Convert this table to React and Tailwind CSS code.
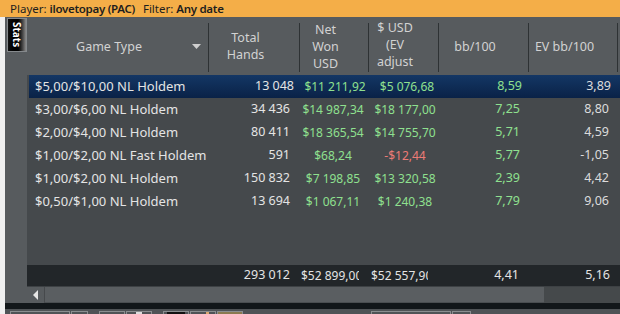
const rows = [
  { game: '$5,00/$10,00 NL Holdem', hands: '13 048', net: '$11 211,92', ev: '$5 076,68', bb: '8,59', evbb: '3,89', selected: true },
  { game: '$3,00/$6,00 NL Holdem', hands: '34 436', net: '$14 987,34', ev: '$18 177,00', bb: '7,25', evbb: '8,80' },
  { game: '$2,00/$4,00 NL Holdem', hands: '80 411', net: '$18 365,54', ev: '$14 755,70', bb: '5,71', evbb: '4,59' },
  { game: '$1,00/$2,00 NL Fast Holdem', hands: '591', net: '$68,24', ev: '-$12,44', bb: '5,77', evbb: '-1,05' },
  { game: '$1,00/$2,00 NL Holdem', hands: '150 832', net: '$7 198,85', ev: '$13 320,58', bb: '2,39', evbb: '4,42' },
  { game: '$0,50/$1,00 NL Holdem', hands: '13 694', net: '$1 067,11', ev: '$1 240,38', bb: '7,79', evbb: '9,06' },
]

const cols = 'grid grid-cols-[182px_91px_69px_70px_90px_89px_2px]'

const HeaderCell = ({ children, last }) => (
  <div className="relative flex items-center justify-center pr-[18px] text-center leading-[17px]">
    {children}
    {!last && <div className="absolute right-0 top-[6px] bottom-[3px] w-px bg-[#2e3234]" />}
  </div>
)

const Row = ({ r }) => {
  const neg = (v) => v.startsWith('-')
  return (
    <div
      className={`${cols} h-[23px] items-center ${r.selected ? 'ml-[2px] bg-gradient-to-b from-[#143765] to-[#0a2247]' : ''}`}
    >
      <div className={`${r.selected ? 'pl-[6px]' : 'pl-[8px]'} text-[#e4e4e4] whitespace-nowrap`}>{r.game}</div>
      <div className={`text-right ${r.selected ? 'pr-[8px]' : 'pr-[10px]'} text-[12.5px] text-[#e4e4e4]`}>{r.hands}</div>
      <div className="text-center pr-[3px] text-[12px] text-[#8fe08f] whitespace-nowrap overflow-hidden">{r.net}</div>
      <div className={`text-center pl-[2px] text-[12px] whitespace-nowrap overflow-hidden ${neg(r.ev) ? 'text-[#ec7b76]' : 'text-[#8fe08f]'}`}>{r.ev}</div>
      <div className="text-right pr-[9px] text-[12.5px] text-[#8fe08f]">{r.bb}</div>
      <div className="text-right pr-[9px] text-[12.5px] text-[#dcdcdc]">{r.evbb}</div>
      <div />
    </div>
  )
}

export default function App() {
  return (
    <div
      className="w-[620px] h-[314px] overflow-hidden flex flex-col bg-[#f0f0f0] text-[13px]"
      style={{ fontFamily: '"Noto Sans", "Open Sans", sans-serif' }}
    >
      <div className="h-[17px] shrink-0 bg-[#f4ae48] flex items-center pl-[10px] text-[11.5px] text-[#1e1e1e] leading-none">
        <span>Player:</span>
        <span className="ml-[3px] font-semibold tracking-[-0.3px]">ilovetopay (PAC)</span>
        <span className="ml-[8px]">Filter:</span>
        <span className="ml-[3px] font-semibold tracking-[-0.3px]">Any date</span>
      </div>

      <div className="flex flex-1 min-h-0 ml-[5px] flex-col bg-[#575b5e]">
        <div className="flex flex-1 min-h-0">
          {/* side panel */}
          <div className="w-[22px] shrink-0 bg-[#575b5e] pt-[1px] pl-[2px]">
            <div className="w-[20px] h-[34px] border border-[#85898c] bg-gradient-to-r from-[#111] via-[#000] to-[#8a8a8a] flex items-center justify-center">
              <span
                className="text-white font-bold text-[10px] leading-none"
                style={{ writingMode: 'vertical-rl' }}
              >
                Stats
              </span>
            </div>
          </div>

          {/* table */}
          <div className="flex-1 flex flex-col bg-[#45494c]">
            <div className={`${cols} h-[58px] shrink-0 bg-[#575b5e] text-[12.5px] text-[#d2d2d2]`}>
              <HeaderCell>
                <span>Game Type</span>
                <svg className="absolute right-[8px] top-[27px]" width="9" height="5" viewBox="0 0 9 5">
                  <path d="M0 0h9L4.5 5z" fill="#cfcfcf" />
                </svg>
              </HeaderCell>
              <HeaderCell>
                <span>Total<br />Hands</span>
              </HeaderCell>
              <HeaderCell>
                <span>Net<br />Won<br />USD</span>
              </HeaderCell>
              <HeaderCell>
                <span className="-mt-[3px]">$ USD<br />(EV<br />adjust</span>
              </HeaderCell>
              <HeaderCell>
                <span>bb/100</span>
              </HeaderCell>
              <HeaderCell>
                <span>EV bb/100</span>
              </HeaderCell>
              <div />
            </div>

            <div className="flex-1 min-h-0">
              {rows.map((r) => (
                <Row key={r.game} r={r} />
              ))}
            </div>

            <div className={`${cols} h-[21px] shrink-0 items-center bg-[#222629] text-[12.5px] text-[#e4e4e4]`}>
              <div />
              <div className="text-right pr-[10px]">293 012</div>
              <div className="pl-[1px] text-[12px] whitespace-nowrap overflow-hidden w-[59px]">$52 899,00</div>
              <div className="pl-[2px] text-[12px] whitespace-nowrap overflow-hidden w-[59px]">$52 557,90</div>
              <div className="text-right pr-[10px]">4,41</div>
              <div className="text-right pr-[8px]">5,16</div>
              <div />
            </div>

            <div className="h-[17px] shrink-0 flex bg-[#45494b] border-t border-[#3d4144]">
              <div className="w-[18px] flex items-center justify-center bg-[#575b5e] border-r border-[#46494c]">
                <svg width="5" height="10" viewBox="0 0 5 10">
                  <path d="M5 0v10L0 5z" fill="#e6e6e6" />
                </svg>
              </div>
              <div className="w-[499px] bg-[#5a5e61] border-b border-[#4a4e51]" />
            </div>
          </div>
        </div>

        <div className="h-[6px] shrink-0 bg-[#12171a]" />
        <div className="h-[5px] shrink-0 bg-[#4f5356] flex items-start pt-[2px] pl-[5px] gap-[1px]">
          <div className="w-[60px] h-[4px] border-t border-x border-[#8a8e90]" />
          <div className="w-[17px] h-[4px] border-t border-x border-[#8a8e90]" />
          <div className="ml-[10px] w-[26px] h-[4px] border-t border-x border-[#8a8e90]" />
          <div className="w-[26px] h-[4px] border-t border-x border-[#8a8e90] flex justify-center"><div className="w-[6px] h-[3px] bg-[#ddd]" /></div>
          <div className="ml-[10px] w-[26px] h-[4px] border-t border-x border-[#8a8e90] flex justify-center"><div className="w-[18px] h-[3px] bg-[#111]" /></div>
          <div className="w-[26px] h-[4px] border-t border-x border-[#8a8e90] flex justify-end pr-[6px]"><div className="w-[3px] h-[3px] bg-[#d9a770]" /></div>
          <div className="w-[26px] h-[4px] border-t border-x border-[#8a8e90] bg-[#8a7a50]" />
          <div className="ml-[127px] w-[80px] h-[4px] border-t border-x border-[#8a8e90]" />
          <div className="w-[19px] h-[4px] border-t border-x border-[#8a8e90]" />
        </div>
      </div>
    </div>
  )
}
